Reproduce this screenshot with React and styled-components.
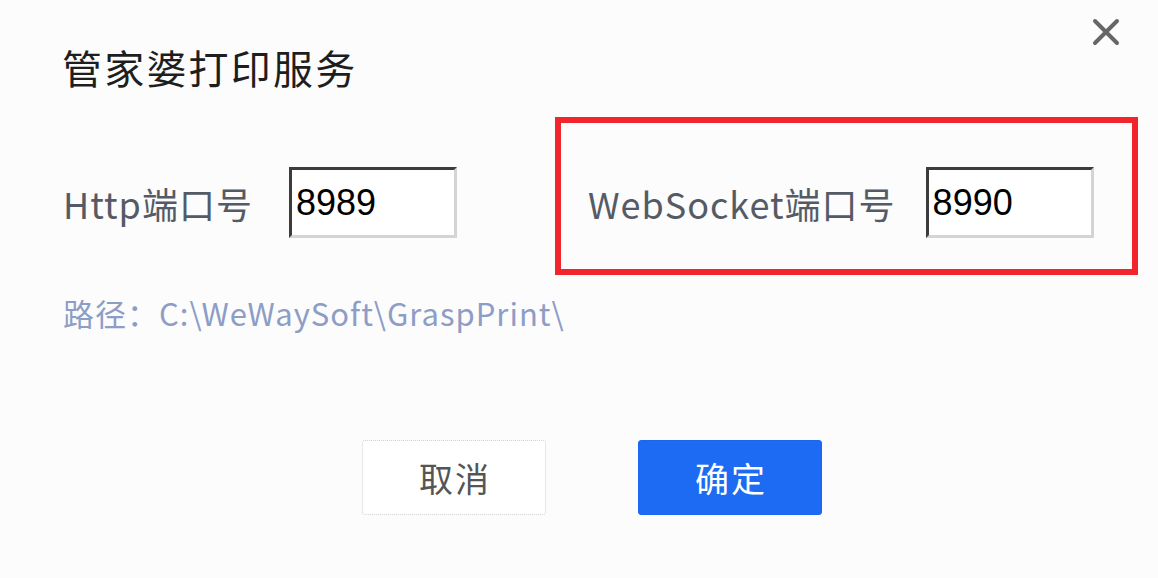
import React from 'react';
import styled, {createGlobalStyle} from "styled-components";

const GlobalStyle = createGlobalStyle`
  html, body {
    margin: 0;
    padding: 0;
    background: #fbfcfb;
  }
  * {
    box-sizing: border-box;
  }
`;

const CJK = `"Noto Sans CJK SC", "Noto Sans", sans-serif`;

const App = () => {
    return (
        <>
            <GlobalStyle/>
            <Dialog>
                <Header>
                    <Title>管家婆打印服务</Title>
                    <CloseButton type='button' aria-label='关闭'>
                        <svg width="28" height="28" viewBox="0 0 28 28">
                            <path d="M3 3 L25 25 M25 3 L3 25" stroke="#666" strokeWidth="4" strokeLinecap="round"/>
                        </svg>
                    </CloseButton>
                </Header>

                <PortRow>
                    <PortField>
                        <Label>Http端口号</Label>
                        <PortInput readOnly value='8989'/>
                    </PortField>
                    <Highlight>
                        <PortField $gap={30}>
                            <Label>WebSocket端口号</Label>
                            <PortInput readOnly value='8990'/>
                        </PortField>
                    </Highlight>
                </PortRow>

                <PathText>路径：C:\WeWaySoft\GraspPrint\</PathText>

                <Footer>
                    <Button type='button'>取消</Button>
                    <Button type='button' $primary>确定</Button>
                </Footer>
            </Dialog>
        </>
    );
};

const Dialog = styled.div`
  width: 1158px;
  height: 578px;
  background: #fbfcfb;
  font-family: ${CJK};
  overflow: hidden;
`;

const Header = styled.div`
  display: flex;
  justify-content: space-between;
  align-items: flex-start;
  padding: 0 38px 0 62px;
`;

const Title = styled.h1`
  margin: 45px 0 0;
  font-size: 40px;
  line-height: 44px;
  font-weight: 400;
  color: #1e1e1e;
  letter-spacing: 2.2px;
`;

const CloseButton = styled.button`
  margin-top: 18px;
  width: 28px;
  height: 28px;
  padding: 0;
  border: none;
  background: none;
  display: flex;
  cursor: pointer;
`;

const PortRow = styled.div`
  display: flex;
  align-items: flex-start;
  gap: 98px;
  padding-left: 63px;
  margin-top: 28px;
`;

const PortField = styled.div`
  display: flex;
  align-items: center;
  gap: ${p => p.$gap || 36}px;
  margin-top: ${p => (p.$gap ? 0 : 50)}px;
`;

const Highlight = styled.div`
  width: 583px;
  height: 158px;
  border: 6px solid #f2242c;
  padding: 44px 0 0 27px;
`;

const Label = styled.span`
  font-size: 36px;
  line-height: 40px;
  letter-spacing: 1px;
  color: #555b66;
  white-space: nowrap;
`;

const PortInput = styled.input`
  width: 168px;
  height: 71px;
  border-style: solid;
  border-width: 3px;
  border-color: #3c3c3c #d4d4d4 #d4d4d4 #3c3c3c;
  background: #fff;
  padding: 0 0 0 4px;
  font-family: "Liberation Sans", Arial, sans-serif;
  font-size: 36px;
  color: #000;
  outline: none;
`;

const PathText = styled.div`
  margin-top: 18px;
  padding-left: 63px;
  font-size: 31px;
  line-height: 40px;
  letter-spacing: 1px;
  color: #8d9dc6;
`;

const Footer = styled.div`
  display: flex;
  gap: 92px;
  padding-left: 362px;
  margin-top: 107px;
`;

const Button = styled.button`
  width: 184px;
  height: 75px;
  border-radius: 3px;
  font-family: ${CJK};
  font-size: 34px;
  letter-spacing: 2px;
  padding: 0 0 0 2px;
  cursor: pointer;
  border: 1px ${p => (p.$primary ? 'solid #1a66f0' : 'dotted #cfcfcf')};
  background: ${p => (p.$primary ? '#1d6bf3' : '#fff')};
  color: ${p => (p.$primary ? '#fff' : '#555')};
`;

export default App;
